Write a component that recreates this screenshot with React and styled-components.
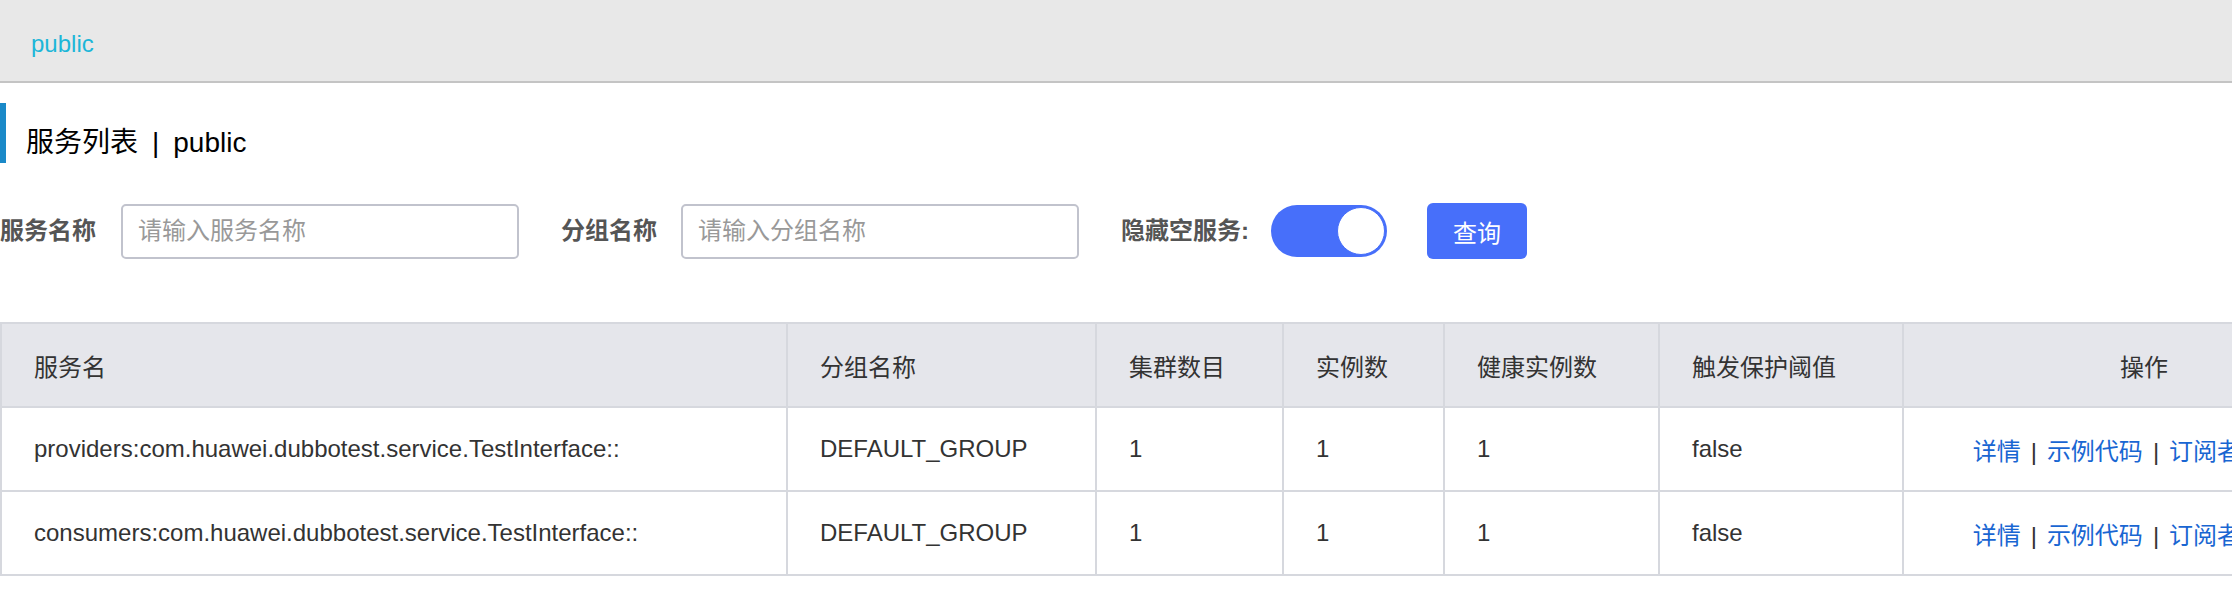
import React from "react";
import styled, { createGlobalStyle } from "styled-components";

const GlobalStyle = createGlobalStyle`
  html, body {
    margin: 0;
    padding: 0;
    overflow: hidden;
    background: #ffffff;
    font-family: "Liberation Sans", "Noto Sans CJK SC", sans-serif;
  }
  * { box-sizing: border-box; }
`;

const Page = styled.div`
  width: 2232px;
`;

const TopBar = styled.header`
  height: 83px;
  background: #e8e8e8;
  border-bottom: 2px solid #c4c4c4;
  padding: 30px 31px 0;
`;

const NamespaceLink = styled.a`
  font-size: 24px;
  line-height: 28px;
  color: #1cb6d8;
  text-decoration: none;
  cursor: pointer;
`;

const TitleBlock = styled.h1`
  margin: 20px 0 0;
  height: 60px;
  border-left: 6px solid #1a89c8;
  padding: 20px 0 0 20px;
  font-size: 28px;
  line-height: 40px;
  font-weight: 400;
  color: #000;
`;

const TitleSep = styled.span`
  margin: 0 14px;
`;

const FilterBar = styled.div`
  display: flex;
  align-items: center;
  height: 56px;
  margin-top: 40px;
`;

const Field = styled.div`
  display: flex;
  align-items: center;
  margin-right: ${(p) => p.$gap}px;
`;

const FieldLabel = styled.label`
  font-size: 24px;
  line-height: 28px;
  font-weight: 700;
  color: #555;
  white-space: nowrap;
  margin-right: ${(p) => p.$gap}px;
`;

const TextInput = styled.input`
  width: 398px;
  height: 55px;
  border: 2px solid #c1c3cd;
  border-radius: 5px;
  padding: 0 15px;
  font-family: inherit;
  font-size: 24px;
  color: #333;
  outline: none;
  &::placeholder {
    color: #999;
  }
`;

const Toggle = styled.button`
  display: flex;
  align-items: center;
  justify-content: ${(p) => (p.$on ? "flex-end" : "flex-start")};
  width: 116px;
  height: 52px;
  padding: 2px;
  border: none;
  border-radius: 26px;
  background: ${(p) => (p.$on ? "#476ffa" : "#c9ccd4")};
  cursor: pointer;
`;

const Knob = styled.span`
  width: 48px;
  height: 48px;
  border-radius: 50%;
  background: #fff;
  border: 1px solid #476ffa;
`;

const QueryButton = styled.button`
  width: 100px;
  height: 56px;
  border: none;
  border-radius: 6px;
  background: #476ffa;
  color: #fff;
  font-family: inherit;
  font-size: 24px;
  cursor: pointer;
`;

const Table = styled.table`
  margin-top: 63px;
  width: 2384px;
  table-layout: fixed;
  border-collapse: collapse;
  font-size: 24px;
  color: #333;
`;

const HeadCell = styled.th`
  height: 84px;
  padding: 0 32px;
  border: 2px solid #d6d8de;
  background: #e5e6eb;
  font-weight: 400;
  text-align: ${(p) => p.$align || "left"};
  white-space: nowrap;
`;

const Cell = styled.td`
  height: 84px;
  padding: 0 32px;
  border: 2px solid #d6d8de;
  text-align: ${(p) => p.$align || "left"};
  white-space: nowrap;
`;

const ActionLink = styled.a`
  color: #1966d2;
  text-decoration: none;
  cursor: pointer;
`;

const ActionSep = styled.span`
  margin: 0 10px;
  color: #333;
`;

const columns = [
  { key: "name", title: "服务名", width: 786 },
  { key: "group", title: "分组名称", width: 309 },
  { key: "clusters", title: "集群数目", width: 187 },
  { key: "instances", title: "实例数", width: 161 },
  { key: "healthy", title: "健康实例数", width: 215 },
  { key: "threshold", title: "触发保护阈值", width: 244 },
  { key: "ops", title: "操作", width: 482, align: "center" },
];

const rows = [
  {
    name: "providers:com.huawei.dubbotest.service.TestInterface::",
    group: "DEFAULT_GROUP",
    clusters: 1,
    instances: 1,
    healthy: 1,
    threshold: "false",
  },
  {
    name: "consumers:com.huawei.dubbotest.service.TestInterface::",
    group: "DEFAULT_GROUP",
    clusters: 1,
    instances: 1,
    healthy: 1,
    threshold: "false",
  },
];

const actions = ["详情", "示例代码", "订阅者", "删除"];

export default function App() {
  return (
    <Page>
      <GlobalStyle />
      <TopBar>
        <NamespaceLink>public</NamespaceLink>
      </TopBar>
      <TitleBlock>
        服务列表<TitleSep>|</TitleSep>public
      </TitleBlock>
      <FilterBar>
        <Field $gap={42}>
          <FieldLabel $gap={25}>服务名称</FieldLabel>
          <TextInput placeholder="请输入服务名称" />
        </Field>
        <Field $gap={42}>
          <FieldLabel $gap={24}>分组名称</FieldLabel>
          <TextInput placeholder="请输入分组名称" />
        </Field>
        <Field $gap={40}>
          <FieldLabel $gap={22}>隐藏空服务:</FieldLabel>
          <Toggle $on aria-pressed="true">
            <Knob />
          </Toggle>
        </Field>
        <QueryButton>查询</QueryButton>
      </FilterBar>
      <Table>
        <colgroup>
          {columns.map((c) => (
            <col key={c.key} style={{ width: c.width }} />
          ))}
        </colgroup>
        <thead>
          <tr>
            {columns.map((c) => (
              <HeadCell key={c.key} $align={c.align}>
                {c.title}
              </HeadCell>
            ))}
          </tr>
        </thead>
        <tbody>
          {rows.map((r) => (
            <tr key={r.name}>
              <Cell>{r.name}</Cell>
              <Cell>{r.group}</Cell>
              <Cell>{r.clusters}</Cell>
              <Cell>{r.instances}</Cell>
              <Cell>{r.healthy}</Cell>
              <Cell>{r.threshold}</Cell>
              <Cell $align="center">
                {actions.map((a, i) => (
                  <React.Fragment key={a}>
                    {i > 0 && <ActionSep>|</ActionSep>}
                    <ActionLink>{a}</ActionLink>
                  </React.Fragment>
                ))}
              </Cell>
            </tr>
          ))}
        </tbody>
      </Table>
    </Page>
  );
}
